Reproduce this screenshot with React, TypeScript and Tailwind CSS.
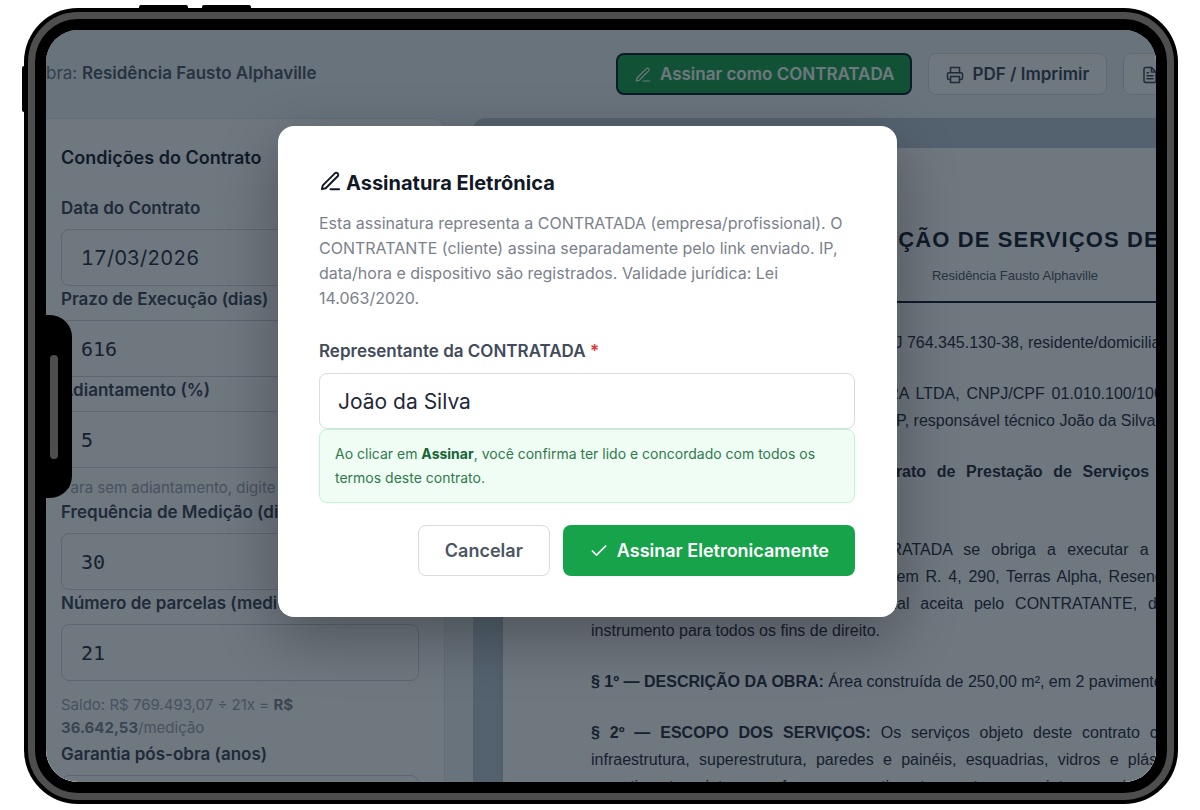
import type { ReactNode } from "react";

function PenLineIcon({ className }: { className: string }) {
  return (
    <svg viewBox="0 0 24 24" fill="none" stroke="currentColor" strokeLinecap="round" strokeLinejoin="round" className={className} aria-hidden="true">
      <path d="M12 20h9" />
      <path d="M16.5 3.5a2.121 2.121 0 0 1 3 3L7 19l-4 1 1-4L16.5 3.5z" />
    </svg>
  );
}

function PrinterIcon() {
  return (
    <svg viewBox="0 0 24 24" fill="none" stroke="currentColor" strokeLinecap="round" strokeLinejoin="round" className="size-[18px] stroke-2" aria-hidden="true">
      <path d="M6 9V2h12v7" />
      <path d="M6 18H4a2 2 0 0 1-2-2v-5a2 2 0 0 1 2-2h16a2 2 0 0 1 2 2v5a2 2 0 0 1-2 2h-2" />
      <path d="M6 14h12v8H6z" />
    </svg>
  );
}

function FileTextIcon() {
  return (
    <svg viewBox="0 0 24 24" fill="none" stroke="currentColor" strokeLinecap="round" strokeLinejoin="round" className="size-[18px] stroke-2" aria-hidden="true">
      <path d="M14 2H6a2 2 0 0 0-2 2v16a2 2 0 0 0 2 2h12a2 2 0 0 0 2-2V8z" />
      <path d="M14 2v6h6M16 13H8M16 17H8M10 9H8" />
    </svg>
  );
}

function CheckIcon() {
  return (
    <svg viewBox="0 0 24 24" fill="none" stroke="currentColor" strokeLinecap="round" strokeLinejoin="round" className="size-5 stroke-2" aria-hidden="true">
      <path d="M20 6 9 17l-5-5" />
    </svg>
  );
}

type FieldProps = { id: string; label: string; value: string; mono?: boolean; children?: ReactNode };

function Field({ id, label, value, mono = true, children }: FieldProps) {
  return (
    <div>
      <label htmlFor={id} className="block h-[34px] pt-px text-[17px] leading-6 font-semibold text-[#374151]">
        {label}
      </label>
      <input
        id={id}
        defaultValue={value}
        className={
          "block h-[57px] w-full rounded-lg border border-[#d1d5db] bg-white px-[19px] text-xl text-[#1f2937] " +
          (mono ? "font-['DejaVu_Sans_Mono',monospace]" : "tabular-nums")
        }
      />
      {children}
    </div>
  );
}

function Header() {
  return (
    <header className="flex h-[88px] shrink-0 items-center bg-[#f0f5f8] whitespace-nowrap">
      <p className="-ml-[13px] text-[17px] text-[#6b7280]">
        Obra: <strong className="font-semibold text-[#4b5563]">Residência Fausto Alphaville</strong>
      </p>
      <div className="-mr-[73px] ml-auto flex items-center gap-4">
        <button className="flex h-[42px] items-center gap-2 rounded-lg border-2 border-[#0f172a] bg-[#16a34a] px-4 pt-0.5 text-[17px] font-semibold text-white">
          <PenLineIcon className="size-[18px] stroke-[1.5]" />
          Assinar como CONTRATADA
        </button>
        <button className="flex h-[42px] items-center gap-2 rounded-lg border border-[#d9dee4] bg-white px-[17px] pt-0.5 text-[17px] font-semibold text-[#374151]">
          <PrinterIcon />
          PDF / Imprimir
        </button>
        <button className="flex h-[42px] items-center gap-2 rounded-lg border border-[#d9dee4] bg-white px-[17px] pt-0.5 text-[17px] font-semibold text-[#374151]">
          <FileTextIcon />
          Word
        </button>
      </div>
    </header>
  );
}

function Sidebar() {
  return (
    <aside className="w-[399px] shrink-0 rounded-tr-xl border-t border-r border-[#e2e6ea] bg-white pr-[25px] pl-[15px]">
      <h2 className="pt-[27px] pb-[25px] text-lg leading-6 font-semibold text-[#111827]">Condições do Contrato</h2>
      <Field id="data" label="Data do Contrato" value="17/03/2026" mono={false} />
      <Field id="prazo" label="Prazo de Execução (dias)" value="616" />
      <Field id="adiantamento" label="Adiantamento (%)" value="5">
        <p className="mt-2 text-[15px] leading-[23px] whitespace-nowrap text-[#9ca3af]">Para sem adiantamento, digite 0.</p>
      </Field>
      <Field id="frequencia" label="Frequência de Medição (dias)" value="30" />
      <Field id="parcelas" label="Número de parcelas (medições)" value="21">
        <p className="mt-3 mb-0.5 w-[270px] text-[15px] leading-[23px] text-[#9ca3af]">
          Saldo: R$ 769.493,07 ÷ 21x = <strong className="font-bold text-[#7b8490]">R$ 36.642,53</strong>/medição
        </p>
      </Field>
      <Field id="garantia" label="Garantia pós-obra (anos)" value="5" />
    </aside>
  );
}

function ContractSheet() {
  return (
    <section className="ml-7 shrink-0 rounded-tl-xl bg-[#bccbd6] px-[30px] pt-[30px]">
      <article className="w-[1024px] bg-white px-[88px] pt-[78px] pb-20 font-['Liberation_Sans',sans-serif] text-[#1f2937] shadow-lg">
        <header className="mb-[26px] border-b-2 border-[#0f172a] pb-[15px] text-center">
          <h1 className="text-[22px] leading-7 font-bold tracking-wider whitespace-nowrap text-[#111827]">
            CONTRATO DE PRESTAÇÃO DE SERVIÇOS DE CONSTRUÇÃO CIVIL
          </h1>
          <p className="mt-3 text-[13px] leading-5 text-[#4b5563]">Residência Fausto Alphaville</p>
        </header>
        <div className="flex flex-col gap-6 text-justify text-base leading-[27px]">
          <p>
            <b>CONTRATANTE:</b> Fausto Costa, CPF/CNPJ 764.345.130-38, residente/domiciliado em Resende/RJ.
          </p>
          <p>
            <b>CONTRATADA:</b> SANTOS CONSTRUTORA LTDA, CNPJ/CPF 01.010.100/1000-10, com sede na Avenida Principal, 10500, Jardim das Palmeiras, São Paulo/SP, responsável técnico João da Silva, CREA 123456.
          </p>
          <p>
            <b>As partes celebram o presente Contrato de Prestação de Serviços de Construção Civil, que se rege exclusivamente pelas cláusulas abaixo.</b>
          </p>
          <p>
            <b>CLÁUSULA 1ª — OBJETO:</b> A CONTRATADA se obriga a executar a construção residencial unifamiliar de aproximadamente 250,00 m², implantada em R. 4, 290, Terras Alpha, Resende/RJ, conforme os projetos, memorial descritivo, planilhas e proposta comercial aceita pelo CONTRATANTE, documentos que integram o presente instrumento para todos os fins de direito.
          </p>
          <p>
            <b>§ 1º — DESCRIÇÃO DA OBRA:</b> Área construída de 250,00 m², em 2 pavimentos.
          </p>
          <p>
            <b>§ 2º — ESCOPO DOS SERVIÇOS:</b> Os serviços objeto deste contrato compreendem a mobilização, locação, infraestrutura, superestrutura, paredes e painéis, esquadrias, vidros e plásticos, coberturas, impermeabilizações, revestimentos internos, forros, revestimentos externos, pinturas, pisos, louças, metais, rodapés, soleiras, climatização/exaustão e instalações.
          </p>
        </div>
      </article>
    </section>
  );
}

function SignatureDialog() {
  return (
    <div className="absolute inset-0 flex items-start justify-center bg-[#0f1c2a]/60 pt-24 pr-[27px]">
      <div role="dialog" aria-labelledby="dialog-title" className="w-full max-w-[619px] rounded-2xl bg-white pt-[41px] pr-[42px] pb-[41px] pl-[41px] shadow-[0_20px_60px_rgba(0,0,0,0.3)]">
        <h2 id="dialog-title" className="flex items-center gap-1 text-xl leading-8 font-bold text-[#111827]">
          <PenLineIcon className="mb-1 size-[23px] stroke-2" />
          Assinatura Eletrônica
        </h2>
        <p className="mt-3 text-base leading-[25px] text-[#7b818c]">
          Esta assinatura representa a CONTRATADA (empresa/profissional). O CONTRATANTE (cliente) assina separadamente pelo link enviado. IP, data/hora e dispositivo são registrados. Validade jurídica: Lei 14.063/2020.
        </p>
        <form className="mt-7">
          <label htmlFor="representante" className="block h-[34px] text-[17px] leading-6 font-semibold text-[#414b5a]">
            Representante da CONTRATADA <span className="text-[#dc3838]">*</span>
          </label>
          <input id="representante" defaultValue="João da Silva" className="block h-14 w-full rounded-lg border border-[#d9dbe0] bg-white px-[18px] text-[21px] text-[#1f2937]" />
          <p className="rounded-lg border border-[#bbf7d0] bg-[#f0fdf4] px-[15px] py-3 text-sm leading-6 text-[#2f7a4a]">
            Ao clicar em <strong className="font-bold text-[#166534]">Assinar</strong>, você confirma ter lido e concordado com todos os<br />
            termos deste contrato.
          </p>
          <div className="mt-[22px] flex justify-end gap-[13px]">
            <button type="button" className="h-[51px] rounded-lg border border-[#d9dbe0] bg-white px-[26px] text-lg font-semibold text-[#4b5563]">
              Cancelar
            </button>
            <button type="button" className="flex h-[51px] items-center gap-2 rounded-lg bg-[#16a34a] px-[26px] text-lg font-semibold text-white">
              <CheckIcon />
              Assinar Eletronicamente
            </button>
          </div>
        </form>
      </div>
    </div>
  );
}

export default function App() {
  return (
    <div className="flex h-screen bg-white pt-2 pr-[22px] pb-1.5 pl-6 font-[Inter,sans-serif]">
      <div className="relative flex min-w-0 flex-1 rounded-[54px] bg-black p-[4px]">
        <span className="absolute -top-[3px] left-[115px] h-[3px] w-[49px] rounded-t-xs bg-black" />
        <span className="absolute -top-[3px] left-[178px] h-[3px] w-[49px] rounded-t-xs bg-black" />
        <span className="absolute top-[58px] -left-[2px] h-[46px] w-[2px] rounded-l-xs bg-black" />
        <div className="flex min-w-0 flex-1 rounded-[50px] border-[7px] border-[#4e4e4e] bg-black p-[11px]">
          <div className="relative isolate flex min-w-0 flex-1 flex-col overflow-hidden rounded-[32px] bg-black">
            <Header />
            <main className="flex min-h-0 flex-1 bg-[#f0f5f8]">
              <Sidebar />
              <ContractSheet />
            </main>
            <SignatureDialog />
            <div className="absolute top-[285px] left-0 flex h-[183px] w-[26px] items-center rounded-r-[22px] bg-black pl-1">
              <span className="h-[104px] w-2 rounded-full bg-[#4e4e4e]" />
            </div>
          </div>
        </div>
      </div>
    </div>
  );
}
